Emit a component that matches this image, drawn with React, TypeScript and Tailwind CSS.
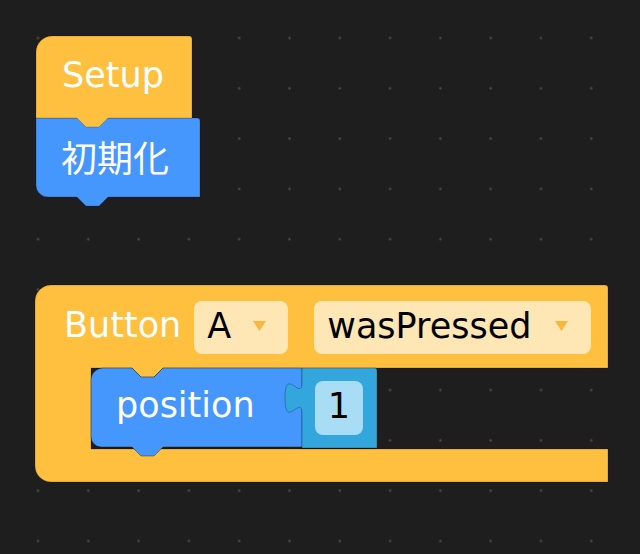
const latin = "font-['DejaVu_Sans','Verdana','Noto_Sans_CJK_JP',sans-serif]"

function Arrow() {
  return (
    <svg width="13" height="10" viewBox="0 0 13 10" className="mb-[3px] shrink-0">
      <polygon points="0,0 13,0 6.5,10" fill="#f6b83f" />
    </svg>
  )
}

function Dropdown({ label, width, padRight }: { label: string; width: string; padRight: string }) {
  return (
    <div
      className={`flex items-center justify-between h-[53px] rounded-[8px] bg-[#fee6b5] pl-[13px] ${width} ${padRight}`}
    >
      <span className="text-[35px] leading-none text-black pb-[2px]">{label}</span>
      <Arrow />
    </div>
  )
}

function SetupStack() {
  return (
    <div className="absolute left-[36px] top-[36px] w-[164px]">
      <svg width="164" height="172" viewBox="0 0 164 172" className="absolute left-0 top-0 overflow-visible">
        <path
          d="M0,82 H161 a3,3 0 0 1 3,3 V161 H72 l-9,9 h-13 l-9,-9 H12 A12,12 0 0 1 0,149 Z"
          fill="#4596fd"
          stroke="#00000030"
        />
        <path
          d="M0,16 A16,16 0 0 1 16,0 H153 a3,3 0 0 1 3,3 V82 H72 l-9,9 h-13 l-9,-9 H0 Z"
          fill="#ffbf3f"
          stroke="#00000030"
        />
      </svg>
      <div className="relative flex flex-col text-white">
        <div className="h-[82px] flex items-center pl-[26px] pb-[4px]">
          <span className="text-[35px] leading-none">Setup</span>
        </div>
        <div className="h-[79px] flex items-center pl-[25px] pb-[4px]">
          <span className="text-[36px] leading-none font-['Noto_Sans_CJK_JP',sans-serif]">初期化</span>
        </div>
      </div>
    </div>
  )
}

function ButtonBlock() {
  return (
    <div className="absolute left-[35px] top-[285px] w-[573px] h-[197px]">
      <svg width="573" height="197" viewBox="0 0 573 197" className="absolute left-0 top-0 overflow-visible">
        <path
          d="M0,16 A16,16 0 0 1 16,0 H570 a3,3 0 0 1 3,3 V83 H128 l-9,9 h-13 l-9,-9 H56 V164 H573 V197 H16 A16,16 0 0 1 0,181 Z"
          fill="#ffbf3f"
          stroke="#00000035"
        />
        <path
          d="M56,95 A12,12 0 0 1 68,83 H97 l9,9 h13 l9,-9 H267 V162 H128 l-9,9 h-13 l-9,-9 H66 A10,10 0 0 1 56,152 Z"
          fill="#4596fd"
          stroke="#00000055"
        />
        <path
          d="M267,83 H340 a2,2 0 0 1 2,2 V163 H267 V129 C267,108 250,146 250,113 C250,80 267,118 267,97 Z"
          fill="#32a6dd"
          stroke="#00000040"
        />
      </svg>
      <div className="relative flex flex-col">
        <div className="h-[83px] flex items-center pl-[29px] pt-[1px]">
          <span className="text-[35px] leading-none text-white pb-[4px]">Button</span>
          <div className="ml-[13px]">
            <Dropdown label="A" width="w-[94px]" padRight="pr-[22px]" />
          </div>
          <div className="ml-[26px]">
            <Dropdown label="wasPressed" width="w-[277px]" padRight="pr-[23px]" />
          </div>
        </div>
        <div className="h-[81px] flex pl-[56px]">
          <div className="w-[211px] h-[79px] flex items-center pl-[25px] pb-[4px]">
            <span className="text-[35px] leading-none text-white">position</span>
          </div>
          <div className="w-[75px] h-[80px] flex items-center pl-[13px]">
            <div className="w-[48px] h-[54px] rounded-[8px] bg-[#a9dcf5] flex items-center justify-center">
              <span className="text-[35px] leading-none text-black pb-[4px]">1</span>
            </div>
          </div>
        </div>
      </div>
    </div>
  )
}

export default function App() {
  return (
    <div
      className={`relative w-[640px] h-[554px] overflow-hidden bg-[#1e1e1e] ${latin} bg-[radial-gradient(circle,#4a4a4a_0.8px,transparent_1.6px)] bg-[length:50.3px_50.3px] bg-[position:12.85px_12.85px]`}
    >
      <SetupStack />
      <ButtonBlock />
    </div>
  )
}
